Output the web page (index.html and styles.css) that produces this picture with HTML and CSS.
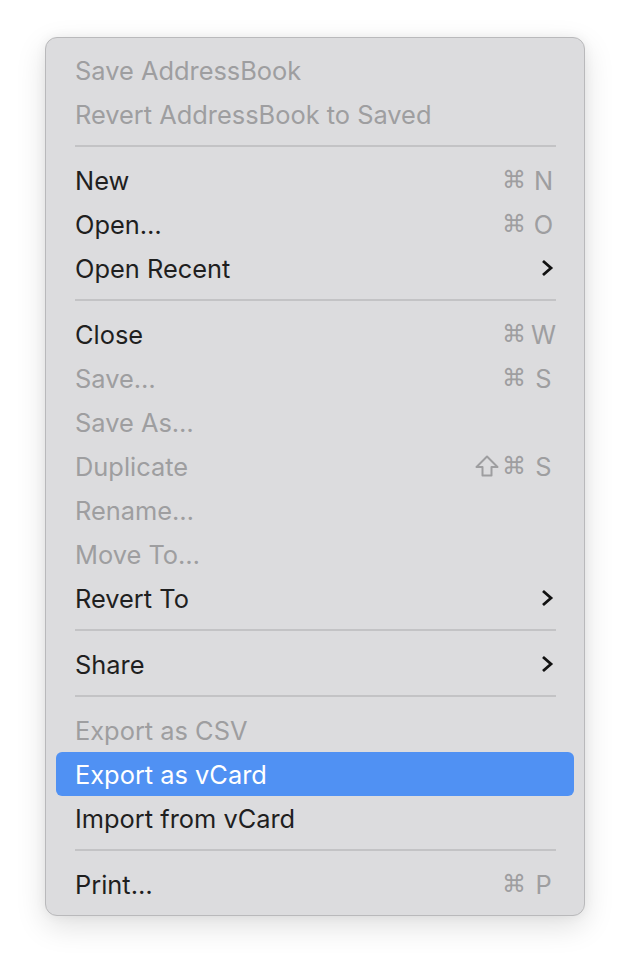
FILE: index.html
```html
<!DOCTYPE html>
<html lang="en">
<head>
    <meta charset="UTF-8">
    <meta name="viewport" content="width=device-width, initial-scale=1.0">
    <title>File Menu</title>
    <link rel="stylesheet" href="styles.css">
</head>
<body>

<div class="menu">
    <div class="item disabled"><span class="label">Save AddressBook</span></div>
    <div class="item disabled"><span class="label">Revert AddressBook to Saved</span></div>
    <div class="separator"></div>

    <div class="item"><span class="label">New</span><span class="keys"><span class="mod">⌘</span><span class="key">N</span></span></div>
    <div class="item"><span class="label">Open…</span><span class="keys"><span class="mod">⌘</span><span class="key">O</span></span></div>
    <div class="item"><span class="label">Open Recent</span><svg class="chevron" width="14" height="20" viewBox="0 0 14 20"><polyline points="3,3 11,10 3,17"/></svg></div>
    <div class="separator"></div>

    <div class="item"><span class="label">Close</span><span class="keys"><span class="mod">⌘</span><span class="key">W</span></span></div>
    <div class="item disabled"><span class="label">Save…</span><span class="keys"><span class="mod">⌘</span><span class="key">S</span></span></div>
    <div class="item disabled"><span class="label">Save As…</span></div>
    <div class="item disabled"><span class="label">Duplicate</span><span class="keys">
        <svg class="shift" width="24" height="22" viewBox="0 0 24 22"><polygon points="12,1.5 22.5,12 16.5,12 16.5,20.5 7.5,20.5 7.5,12 1.5,12"/></svg><span class="mod">⌘</span><span class="key">S</span></span></div>
    <div class="item disabled"><span class="label">Rename…</span></div>
    <div class="item disabled"><span class="label">Move To…</span></div>
    <div class="item"><span class="label">Revert To</span><svg class="chevron" width="14" height="20" viewBox="0 0 14 20"><polyline points="3,3 11,10 3,17"/></svg></div>
    <div class="separator"></div>

    <div class="item"><span class="label">Share</span><svg class="chevron" width="14" height="20" viewBox="0 0 14 20"><polyline points="3,3 11,10 3,17"/></svg></div>
    <div class="separator"></div>

    <div class="item disabled"><span class="label">Export as CSV</span></div>
    <div class="item selected"><span class="label">Export as vCard</span></div>
    <div class="item"><span class="label">Import from vCard</span></div>
    <div class="separator"></div>

    <div class="item"><span class="label">Print…</span><span class="keys"><span class="mod">⌘</span><span class="key">P</span></span></div>
</div>

</body>
</html>
```

FILE: styles.css
```css
body {
    margin: 0;
    min-height: 970px;
    background-color: #ffffff;
    font-family: Inter, "Noto Sans", sans-serif;
}
.menu {
    box-sizing: border-box;
    width: 540px;
    margin: 37px 0 0 45px;
    padding: 10px 10px 9px;
    background: #dcdcde;
    border: 1px solid #b9b9bb;
    border-radius: 12px;
    box-shadow: 0 10px 30px rgba(0, 0, 0, 0.13), 0 0 12px rgba(0, 0, 0, 0.05);
}
.item {
    display: flex;
    align-items: center;
    height: 44px;
    padding: 0 16px 0 19px;
    border-radius: 6px;
    color: #1f1f1f;
    font-size: 25.4px;
}
.item .label {
    flex: 1;
}
.item.disabled {
    color: #9e9ea0;
}
.item.selected {
    background-color: #5091f3;
    color: white;
}
.keys {
    display: flex;
    align-items: center;
    color: #9e9ea0;
}
.mod {
    font-family: "DejaVu Sans", sans-serif;
    font-size: 24px;
    letter-spacing: 3px;
}
.shift {
    margin-right: 3px;
}
.shift polygon {
    fill: none;
    stroke: #9e9ea0;
    stroke-width: 2;
    stroke-linejoin: round;
}
.key {
    width: 29px;
    text-align: center;
}
.chevron {
    margin-right: 4px;
}
.chevron polyline {
    fill: none;
    stroke: #111111;
    stroke-width: 2.8;
}
.separator {
    height: 2px;
    margin: 9px 18px 11px 19px;
    background-color: #c3c3c5;
}
```
